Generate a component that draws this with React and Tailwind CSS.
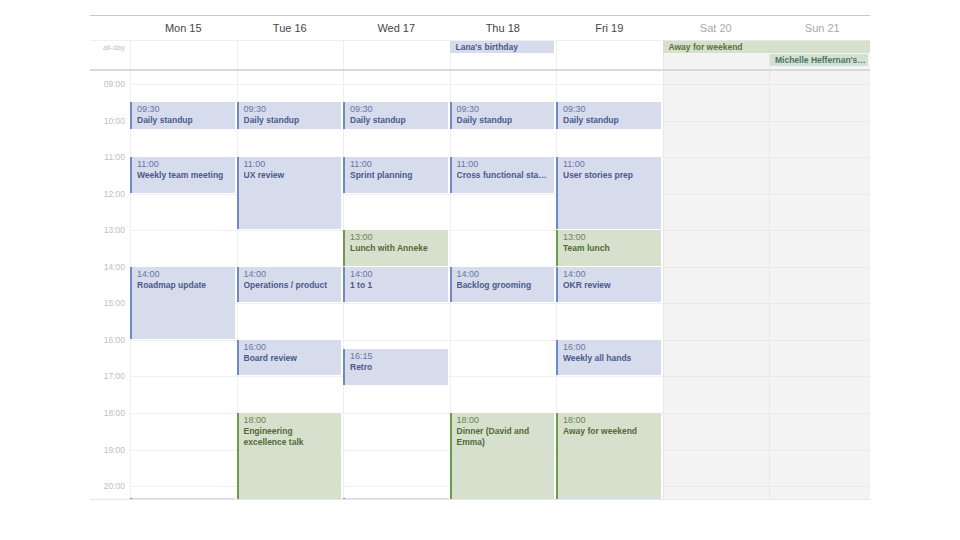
import React from 'react';

const HOUR = 36.55;
const FIRST_HOUR = 8;

const days = [
    { label: 'Mon 15', weekend: false },
    { label: 'Tue 16', weekend: false },
    { label: 'Wed 17', weekend: false },
    { label: 'Thu 18', weekend: false },
    { label: 'Fri 19', weekend: false },
    { label: 'Sat 20', weekend: true },
    { label: 'Sun 21', weekend: true },
];

// rows start at 08:00 (scrolled half out of view); only visible hours get a label
const hours = ['08:00', '09:00', '10:00', '11:00', '12:00', '13:00', '14:00', '15:00', '16:00', '17:00', '18:00', '19:00', '20:00', '21:00'];
const labelled = ['09:00', '10:00', '11:00', '12:00', '13:00', '14:00', '15:00', '16:00', '17:00', '18:00', '19:00', '20:00'];

// start / end in decimal hours
const events = [
    { day: 0, start: 9.5, end: 10.25, time: '09:30', title: 'Daily standup', tone: 'blue' },
    { day: 1, start: 9.5, end: 10.25, time: '09:30', title: 'Daily standup', tone: 'blue' },
    { day: 2, start: 9.5, end: 10.25, time: '09:30', title: 'Daily standup', tone: 'blue' },
    { day: 3, start: 9.5, end: 10.25, time: '09:30', title: 'Daily standup', tone: 'blue' },
    { day: 4, start: 9.5, end: 10.25, time: '09:30', title: 'Daily standup', tone: 'blue' },
    { day: 0, start: 11, end: 12, time: '11:00', title: 'Weekly team meeting', tone: 'blue' },
    { day: 1, start: 11, end: 13, time: '11:00', title: 'UX review', tone: 'blue' },
    { day: 2, start: 11, end: 12, time: '11:00', title: 'Sprint planning', tone: 'blue' },
    { day: 3, start: 11, end: 12, time: '11:00', title: 'Cross functional standup', tone: 'blue' },
    { day: 4, start: 11, end: 13, time: '11:00', title: 'User stories prep', tone: 'blue' },
    { day: 2, start: 13, end: 14, time: '13:00', title: 'Lunch with Anneke', tone: 'green' },
    { day: 4, start: 13, end: 14, time: '13:00', title: 'Team lunch', tone: 'green' },
    { day: 0, start: 14, end: 16, time: '14:00', title: 'Roadmap update', tone: 'blue' },
    { day: 1, start: 14, end: 15, time: '14:00', title: 'Operations / product', tone: 'blue' },
    { day: 2, start: 14, end: 15, time: '14:00', title: '1 to 1', tone: 'blue' },
    { day: 3, start: 14, end: 15, time: '14:00', title: 'Backlog grooming', tone: 'blue' },
    { day: 4, start: 14, end: 15, time: '14:00', title: 'OKR review', tone: 'blue' },
    { day: 1, start: 16, end: 17, time: '16:00', title: 'Board review', tone: 'blue' },
    { day: 2, start: 16.25, end: 17.25, time: '16:15', title: 'Retro', tone: 'blue' },
    { day: 4, start: 16, end: 17, time: '16:00', title: 'Weekly all hands', tone: 'blue' },
    { day: 1, start: 18, end: 22, time: '18:00', title: 'Engineering excellence talk', tone: 'green', wrap: true },
    { day: 3, start: 18, end: 22, time: '18:00', title: 'Dinner (David and Emma)', tone: 'green', wrap: true },
    { day: 4, start: 18, end: 22, time: '18:00', title: 'Away for weekend', tone: 'green' },
    { day: 0, start: 20.33, end: 21.5, time: '', title: '', tone: 'blue' },
    { day: 2, start: 20.33, end: 21.5, time: '', title: '', tone: 'blue' },
    { day: 4, start: 20.33, end: 21.5, time: '', title: '', tone: 'blue' },
];

const tones = {
    blue: {
        box: 'bg-[#d6dcec] border-[#7088c4]',
        time: 'text-[#6676a4]',
        title: 'text-[#4a5a8b]',
    },
    green: {
        box: 'bg-[#d7e0cd] border-[#6f9a4c]',
        time: 'text-[#6a8452]',
        title: 'text-[#4f6b36]',
    },
};

const EventBlock = ({ event }) => {
    const tone = tones[event.tone];
    return (
        <div
            className={`absolute -left-px right-[2px] overflow-hidden border-l-2 pl-[5px] pt-[2px] ${tone.box}`}
            style={{
                top: (event.start - FIRST_HOUR) * HOUR,
                height: (event.end - event.start) * HOUR - 1,
            }}
        >
            {event.time && (
                <>
                    <div className={`text-[9px] leading-[11px] ${tone.time}`}>{event.time}</div>
                    <div
                        className={`text-[8.5px] leading-[11px] font-bold pr-1 ${tone.title} ${event.wrap ? '' : 'truncate'}`}
                    >
                        {event.title}
                    </div>
                </>
            )}
        </div>
    );
};

export default function App() {
    return (
        <div className="w-[960px] h-[540px] bg-white font-['Liberation_Sans',Arial,sans-serif]">
            <div className="pt-[15px] pl-[90px]">
                <div className="w-[780px] overflow-hidden border-t border-[#c9c9c9]">
                    {/* Day headers */}
                    <div className="grid grid-cols-[40px_repeat(7,106.5px)] h-[24px]">
                        <div />
                        {days.map(d => (
                            <div
                                key={d.label}
                                className={`flex items-center justify-center text-[11px] ${d.weekend ? 'text-[#a9a9a9]' : 'text-[#454545]'}`}
                            >
                                {d.label}
                            </div>
                        ))}
                    </div>

                    {/* All-day strip */}
                    <div className="grid grid-cols-[40px_repeat(7,106.5px)] grid-rows-[1px_12px_1px_12px_3px] border-b-2 border-[#dadada]">
                        <div className="col-start-1 row-start-1 row-span-5 border-t border-[#f0f0f0]">
                            <div className="pt-[1px] pr-[5px] text-right text-[7.5px] leading-[12px] text-[#c2c2c2]">all-day</div>
                        </div>
                        {days.map((d, i) => (
                            <div
                                key={d.label}
                                style={{ gridColumnStart: i + 2 }}
                                className={`row-start-1 row-span-5 border-l border-t ${d.weekend ? 'bg-[#f4f4f4] border-[#e8e8e8]' : 'bg-white border-[#efefef]'}`}
                            />
                        ))}
                        <div className="col-start-5 row-start-2 mr-[2px] bg-[#d6dcec] pl-[6px] text-[8.5px] leading-[12px] font-bold text-[#4a5a8b] truncate">
                            Lana's birthday
                        </div>
                        <div className="col-start-7 col-span-2 row-start-2 bg-[#d7e0cd] pl-[6px] text-[8.5px] leading-[12px] font-bold text-[#56733b] truncate">
                            Away for weekend
                        </div>
                        <div className="col-start-8 row-start-4 ml-[1px] mr-[8px] bg-[#d3e0d6] pl-[5px] text-[8.5px] leading-[12px] font-bold text-[#4b7560] truncate">
                            Michelle Heffernan's birthday
                        </div>
                    </div>

                    {/* Timed grid */}
                    <div className="h-[429px] overflow-hidden border-b border-[#e6e6e6]">
                        <div className="flex -mt-[23.5px]">
                            <div className="w-[40px] shrink-0">
                                {hours.map(h => (
                                    <div key={h} className="relative h-[36.55px]">
                                        {labelled.includes(h) && (
                                            <span className="absolute right-[5px] top-0 -translate-y-1/2 text-[8.5px] leading-[10px] text-[#c0c0c0]">
                                                {h}
                                            </span>
                                        )}
                                    </div>
                                ))}
                            </div>
                            {days.map((d, i) => (
                                <div
                                    key={d.label}
                                    className={`relative w-[106.5px] shrink-0 border-l ${d.weekend ? 'bg-[#f4f4f4] border-[#e8e8e8]' : 'bg-white border-[#efefef]'}`}
                                >
                                    {hours.map(h => (
                                        <div
                                            key={h}
                                            className={`h-[36.55px] border-t ${d.weekend ? 'border-[#e9e9e9]' : 'border-[#f0f0f0]'}`}
                                        />
                                    ))}
                                    {events
                                        .filter(e => e.day === i)
                                        .map((e, k) => (
                                            <EventBlock key={k} event={e} />
                                        ))}
                                </div>
                            ))}
                        </div>
                    </div>
                </div>
            </div>
        </div>
    );
}
